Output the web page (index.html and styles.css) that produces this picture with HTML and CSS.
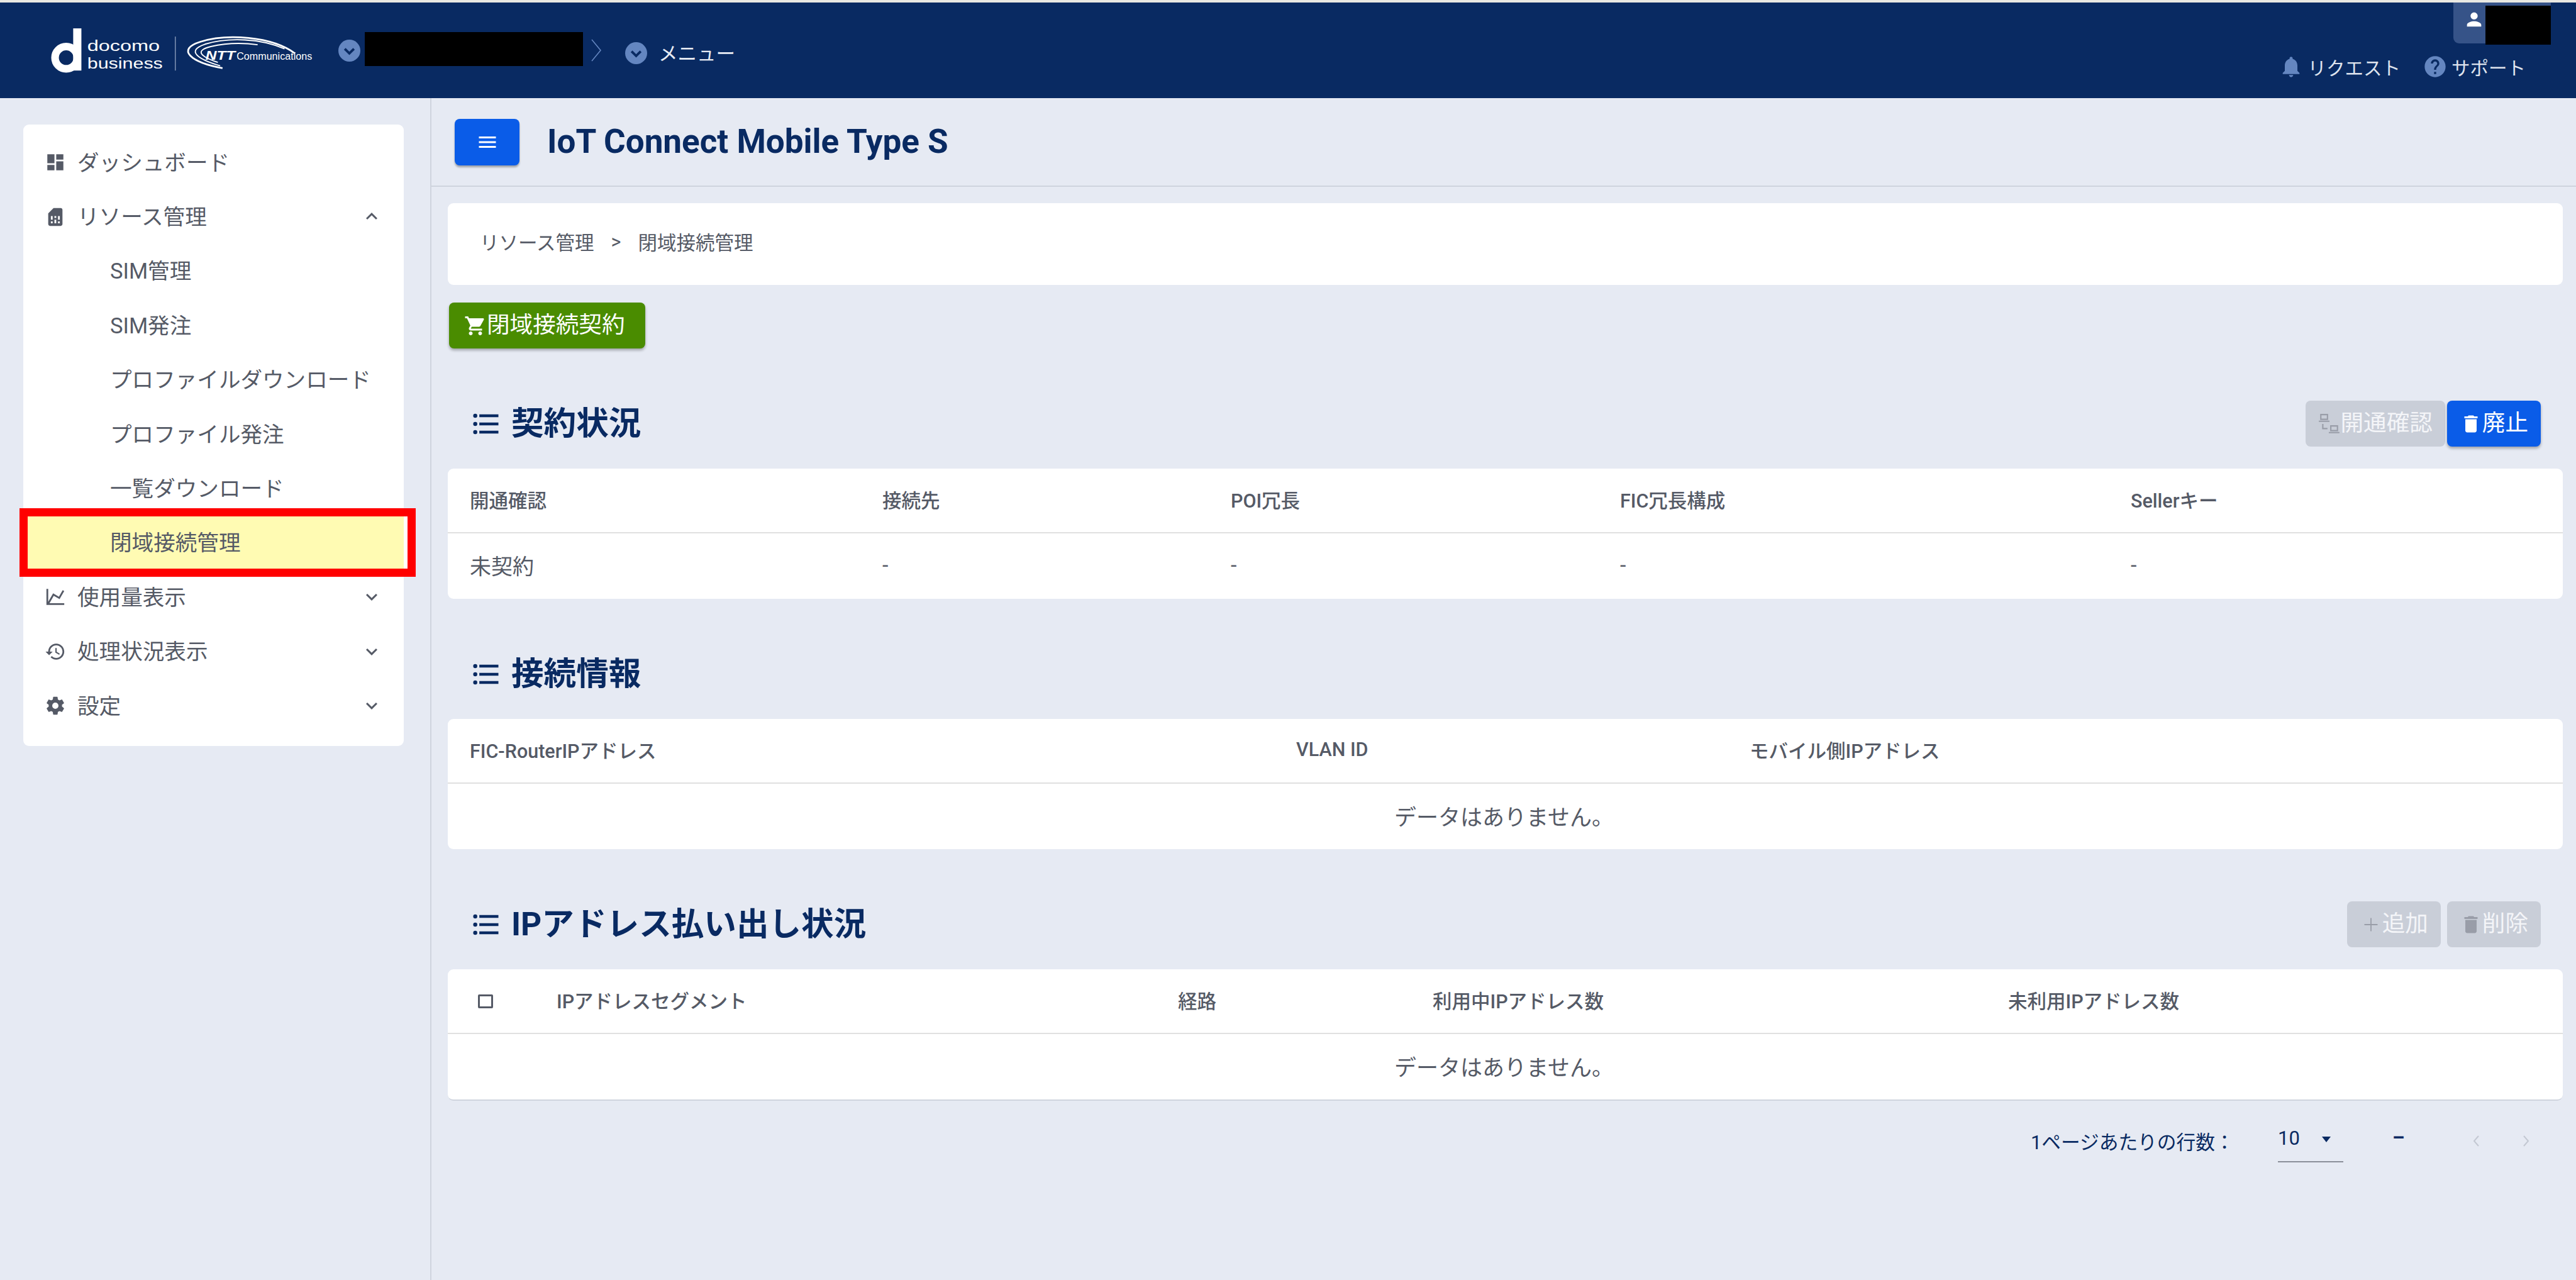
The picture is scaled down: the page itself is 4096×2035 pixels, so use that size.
FILE: index.html
```html
<!DOCTYPE html>
<html lang="ja">
<head>
    <meta charset="UTF-8">
    <title>IoT Connect Mobile Type S</title>
    <link rel="stylesheet" href="styles.css">
</head>
<body>
    <svg class="sprites" width="0" height="0">
        <symbol id="i-dashboard" viewBox="0 0 24 24"><path d="M3 13h8V3H3v10zm0 8h8v-6H3v6zm10 0h8V11h-8v10zm0-18v6h8V3h-8z"/></symbol>
        <symbol id="i-sim" viewBox="0 0 24 24"><path d="M19.99 4c0-1.1-.89-2-1.99-2h-8L4 8v12c0 1.1.9 2 2 2h12c1.1 0 2-.9 2-2l-.01-16zM9 19H7v-2h2v2zm8 0h-2v-2h2v2zm-8-4H7v-4h2v4zm4 4h-2v-4h2v4zm0-6h-2v-2h2v2zm4 2h-2v-4h2v4z"/></symbol>
        <symbol id="i-chart" viewBox="0 0 24 24"><path d="M16,11.78L20.24,4.45L21.97,5.45L16.74,14.5L10.23,10.75L5.46,19H22V21H2V3H4V17.54L9.5,8L16,11.78Z"/></symbol>
        <symbol id="i-history" viewBox="0 0 24 24"><path d="M13 3c-4.97 0-9 4.03-9 9H1l3.89 3.89.07.14L9 12H6c0-3.87 3.13-7 7-7s7 3.13 7 7-3.13 7-7 7c-1.93 0-3.68-.79-4.94-2.06l-1.42 1.42C8.27 19.99 10.51 21 13 21c4.97 0 9-4.03 9-9s-4.03-9-9-9zm-1 5v5l4.28 2.54.72-1.21-3.5-2.08V8H12z"/></symbol>
        <symbol id="i-cog" viewBox="0 0 24 24"><path d="M12,15.5A3.5,3.5 0 0,1 8.5,12A3.5,3.5 0 0,1 12,8.5A3.5,3.5 0 0,1 15.5,12A3.5,3.5 0 0,1 12,15.5M19.43,12.97C19.47,12.65 19.5,12.33 19.5,12C19.5,11.67 19.47,11.34 19.43,11L21.54,9.37C21.73,9.22 21.78,8.95 21.66,8.73L19.66,5.27C19.54,5.05 19.27,4.96 19.05,5.05L16.56,6.05C16.04,5.66 15.5,5.32 14.87,5.07L14.5,2.42C14.46,2.18 14.25,2 14,2H10C9.75,2 9.54,2.18 9.5,2.42L9.13,5.07C8.5,5.32 7.96,5.66 7.44,6.05L4.95,5.05C4.73,4.96 4.46,5.05 4.34,5.27L2.34,8.73C2.21,8.95 2.27,9.22 2.46,9.37L4.57,11C4.53,11.34 4.5,11.67 4.5,12C4.5,12.33 4.53,12.65 4.57,12.97L2.46,14.63C2.27,14.78 2.21,15.05 2.34,15.27L4.34,18.73C4.46,18.95 4.73,19.03 4.95,18.95L7.44,17.94C7.96,18.34 8.5,18.68 9.13,18.93L9.5,21.58C9.54,21.82 9.75,22 10,22H14C14.25,22 14.46,21.82 14.5,21.58L14.87,18.93C15.5,18.67 16.04,18.34 16.56,17.94L19.05,18.95C19.27,19.03 19.54,18.95 19.66,18.73L21.66,15.27C21.78,15.05 21.73,14.78 21.54,14.63L19.43,12.97Z"/></symbol>
        <symbol id="i-down" viewBox="0 0 24 24"><path d="M16.59 8.59L12 13.17 7.41 8.59 6 10l6 6 6-6z"/></symbol>
        <symbol id="i-up" viewBox="0 0 24 24"><path d="M12 8l-6 6 1.41 1.41L12 10.83l4.59 4.58L18 14z"/></symbol>
        <symbol id="i-cart" viewBox="0 0 24 24"><path d="M7 18c-1.1 0-1.99.9-1.99 2S5.9 22 7 22s2-.9 2-2-.9-2-2-2zM1 2v2h2l3.6 7.59-1.35 2.45c-.16.28-.25.61-.25.96 0 1.1.9 2 2 2h12v-2H7.42c-.14 0-.25-.11-.25-.25l.03-.12.9-1.63h7.45c.75 0 1.41-.41 1.75-1.03l3.58-6.49c.08-.14.12-.31.12-.48 0-.55-.45-1-1-1H5.21l-.94-2H1zm16 16c-1.1 0-1.99.9-1.99 2s.89 2 1.99 2 2-.9 2-2-.9-2-2-2z"/></symbol>
        <symbol id="i-list" viewBox="0 0 24 24"><path d="M7,5H21V7H7V5M7,13V11H21V13H7M4,4.5A1.5,1.5 0 0,1 5.5,6A1.5,1.5 0 0,1 4,7.5A1.5,1.5 0 0,1 2.5,6A1.5,1.5 0 0,1 4,4.5M4,10.5A1.5,1.5 0 0,1 5.5,12A1.5,1.5 0 0,1 4,13.5A1.5,1.5 0 0,1 2.5,12A1.5,1.5 0 0,1 4,10.5M7,19V17H21V19H7M4,16.5A1.5,1.5 0 0,1 5.5,18A1.5,1.5 0 0,1 4,19.5A1.5,1.5 0 0,1 2.5,18A1.5,1.5 0 0,1 4,16.5Z"/></symbol>
        <symbol id="i-trash" viewBox="0 0 24 24"><path d="M6 19c0 1.1.9 2 2 2h8c1.1 0 2-.9 2-2V7H6v12zM19 4h-3.5l-1-1h-5l-1 1H5v2h14V4z"/></symbol>
        <symbol id="i-plus" viewBox="0 0 24 24"><path d="M19 12.6h-6.4V19h-1.2v-6.4H5v-1.2h6.4V5h1.2v6.4H19z"/></symbol>
        <symbol id="i-menu" viewBox="0 0 24 24"><path d="M3 18h18v-2H3v2zm0-5h18v-2H3v2zm0-7v2h18V6H3z"/></symbol>
        <symbol id="i-bell" viewBox="0 0 24 24"><path d="M12 22c1.1 0 2-.9 2-2h-4c0 1.1.89 2 2 2zm6-6v-5c0-3.07-1.64-5.64-4.5-6.32V4c0-.83-.67-1.5-1.5-1.5s-1.5.67-1.5 1.5v.68C7.63 5.36 6 7.92 6 11v5l-2 2v1h16v-1l-2-2z"/></symbol>
        <symbol id="i-help" viewBox="0 0 24 24"><path d="M12 2C6.48 2 2 6.48 2 12s4.48 10 10 10 10-4.48 10-10S17.52 2 12 2zm1 17h-2v-2h2v2zm2.07-7.75l-.9.92C13.45 12.9 13 13.5 13 15h-2v-.5c0-1.1.45-2.1 1.17-2.83l1.24-1.26c.37-.36.59-.86.59-1.41 0-1.1-.9-2-2-2s-2 .9-2 2H8c0-2.21 1.79-4 4-4s4 1.79 4 4c0 .88-.36 1.68-.93 2.25z"/></symbol>
        <symbol id="i-person" viewBox="0 0 24 24"><path d="M12 12c2.21 0 4-1.79 4-4s-1.79-4-4-4-4 1.79-4 4 1.79 4 4 4zm0 2c-2.67 0-8 1.34-8 4v2h16v-2c0-2.66-5.33-4-8-4z"/></symbol>
        <symbol id="i-circle-down" viewBox="0 0 24 24"><circle cx="12" cy="12" r="12" fill="#6486c0"/><path d="M7 10l5 5 5-5" fill="none" stroke="#092a62" stroke-width="2.6"/></symbol>
        <symbol id="i-network" viewBox="0 0 34 34"><path d="M3 2h12v9H3zM5 4v5h8V4zM1 12h16v2H1zM18 19h12v9H18zM20 21v5h8v-5zM16 29h16v2H16zM6 17h2v6h6v2H6z"/></symbol>
    </svg>

    <header class="topbar">
        <svg class="logo" viewBox="87 48 450 76">
            <circle cx="113" cy="98" r="19" fill="none" stroke="#fff" stroke-width="13"/>
            <rect x="125" y="48" width="14" height="72" fill="#fff"/>
            <text x="149" y="87" class="logo-text" textLength="124" lengthAdjust="spacingAndGlyphs">docomo</text>
            <text x="149" y="117" class="logo-text" textLength="129" lengthAdjust="spacingAndGlyphs">business</text>
            <rect x="299" y="62" width="1" height="58" fill="#c9d3e6"/>
            <g class="logo-arc">
                <path d="M380 116C326 106 300 84 342 71c44-14 122-10 162 20" stroke-width="3"/>
                <path d="M376 112C336 100 318 86 350 75c40-12 96-10 136 8" stroke-width="2"/>
                <path d="M372 106C342 96 332 86 360 79c26-6 52-7 80-3" stroke-width="2"/>
            </g>
            <text x="351" y="102" class="logo-ntt" textLength="51" lengthAdjust="spacingAndGlyphs">NTT</text>
            <text x="404" y="102" class="logo-com" textLength="129" lengthAdjust="spacingAndGlyphs">Communications</text>
        </svg>
        <svg class="crumb-dot"><use href="#i-circle-down"/></svg>
        <div class="redact-org"></div>
        <svg class="crumb-sep" viewBox="0 0 18 36"><path d="M2 1l14 17L2 35" fill="none" stroke="#6486c0" stroke-width="1.6"/></svg>
        <svg class="crumb-dot crumb-dot-low"><use href="#i-circle-down"/></svg>
        <span class="crumb-menu">メニュー</span>

        <div class="topbar-right">
            <div class="user-tab">
                <svg class="user-icon"><use href="#i-person"/></svg>
                <div class="redact-user"></div>
            </div>
            <div class="toplinks">
                <svg class="toplink-icon"><use href="#i-bell"/></svg>
                <span class="toplink-text">リクエスト</span>
                <svg class="toplink-icon help"><use href="#i-help"/></svg>
                <span class="toplink-text">サポート</span>
            </div>
        </div>
    </header>

    <div class="layout">
        <aside class="sidebar">
            <nav class="nav-card">
                <div class="nav-item"><svg class="nav-icon"><use href="#i-dashboard"/></svg>ダッシュボード</div>
                <div class="nav-item"><svg class="nav-icon"><use href="#i-sim"/></svg>リソース管理<svg class="nav-arrow"><use href="#i-up"/></svg></div>
                <div class="nav-item nav-sub">SIM管理</div>
                <div class="nav-item nav-sub">SIM発注</div>
                <div class="nav-item nav-sub">プロファイルダウンロード</div>
                <div class="nav-item nav-sub">プロファイル発注</div>
                <div class="nav-item nav-sub">一覧ダウンロード</div>
                <div class="nav-item nav-sub nav-active">閉域接続管理</div>
                <div class="nav-item"><svg class="nav-icon"><use href="#i-chart"/></svg>使用量表示<svg class="nav-arrow"><use href="#i-down"/></svg></div>
                <div class="nav-item"><svg class="nav-icon"><use href="#i-history"/></svg>処理状況表示<svg class="nav-arrow"><use href="#i-down"/></svg></div>
                <div class="nav-item"><svg class="nav-icon"><use href="#i-cog"/></svg>設定<svg class="nav-arrow"><use href="#i-down"/></svg></div>
            </nav>
        </aside>

        <main class="main">
            <div class="titlebar">
                <button class="menu-button"><svg class="menu-icon"><use href="#i-menu"/></svg></button>
                <h1 class="page-title">IoT Connect Mobile Type S</h1>
            </div>

            <div class="content">
                <div class="breadcrumb">
                    <span>リソース管理</span>
                    <span class="breadcrumb-sep">&gt;</span>
                    <span>閉域接続管理</span>
                </div>

                <button class="btn btn-green"><svg class="btn-icon"><use href="#i-cart"/></svg>閉域接続契約</button>

                <section class="section">
                    <div class="section-head">
                        <h2 class="section-title"><svg class="section-icon"><use href="#i-list"/></svg>契約状況</h2>
                        <div class="actions actions-tight">
                            <button class="btn btn-off"><svg class="btn-icon"><use href="#i-network"/></svg>開通確認</button>
                            <button class="btn btn-blue"><svg class="btn-icon"><use href="#i-trash"/></svg>廃止</button>
                        </div>
                    </div>
                    <div class="table">
                        <div class="row row-head cols-contract">
                            <div>開通確認</div><div>接続先</div><div>POI冗長</div><div>FIC冗長構成</div><div>Sellerキー</div>
                        </div>
                        <div class="row cols-contract">
                            <div>未契約</div><div>-</div><div>-</div><div>-</div><div>-</div>
                        </div>
                    </div>
                </section>

                <section class="section">
                    <div class="section-head">
                        <h2 class="section-title"><svg class="section-icon"><use href="#i-list"/></svg>接続情報</h2>
                    </div>
                    <div class="table">
                        <div class="row row-head cols-connect">
                            <div>FIC-RouterIPアドレス</div><div>VLAN ID</div><div>モバイル側IPアドレス</div>
                        </div>
                        <div class="row row-empty">データはありません。</div>
                    </div>
                </section>

                <section class="section">
                    <div class="section-head">
                        <h2 class="section-title"><svg class="section-icon"><use href="#i-list"/></svg>IPアドレス払い出し状況</h2>
                        <div class="actions">
                            <button class="btn btn-off"><svg class="btn-icon"><use href="#i-plus"/></svg>追加</button>
                            <button class="btn btn-off"><svg class="btn-icon"><use href="#i-trash"/></svg>削除</button>
                        </div>
                    </div>
                    <div class="table table-last">
                        <div class="row row-head cols-ip">
                            <div><span class="checkbox"></span></div><div>IPアドレスセグメント</div><div>経路</div><div>利用中IPアドレス数</div><div>未利用IPアドレス数</div>
                        </div>
                        <div class="row row-empty">データはありません。</div>
                    </div>
                </section>

                <div class="pager">
                    <span class="pager-label">1ページあたりの行数：</span>
                    <div class="pager-select"><span>10</span><span class="pager-caret"></span></div>
                    <span class="pager-range">–</span>
                    <svg class="pager-arrow" viewBox="0 0 12 18"><path d="M10 1L3 9l7 8" fill="none" stroke="#c3c8d2" stroke-width="2"/></svg>
                    <svg class="pager-arrow pager-next" viewBox="0 0 12 18"><path d="M2 1l7 8-7 8" fill="none" stroke="#c3c8d2" stroke-width="2"/></svg>
                </div>
            </div>
        </main>
    </div>
</body>
</html>
```
FILE: styles.css
```css
* {
    box-sizing: border-box;
}
html, body {
    margin: 0;
    height: 100%;
    overflow: hidden;
}
body {
    background: #e6eaf3;
    color: #555a66;
    font-family: Roboto, "Noto Sans CJK JP", sans-serif;
    display: flex;
    flex-direction: column;
}
button {
    font-family: inherit;
    border: none;
}
svg {
    fill: currentColor;
    flex: none;
}
.sprites {
    position: absolute;
}

/* top bar */
.topbar {
    height: 156px;
    flex: none;
    border-top: 4px solid #e9e8e2;
    background: #092a62;
    color: #e8ecf4;
    padding-left: 81px;
    display: flex;
    align-items: center;
}
.logo {
    width: 419px;
    height: 71px;
    margin-right: 38px;
}
.logo-text {
    font-family: "Liberation Sans", sans-serif;
    font-size: 26px;
    fill: #fff;
}
.logo-arc path {
    fill: none;
    stroke: #fff;
}
.logo-ntt {
    font-family: "Liberation Sans", sans-serif;
    font-size: 21px;
    font-weight: bold;
    font-style: italic;
    fill: #fff;
}
.logo-com {
    font-family: "Liberation Sans", sans-serif;
    font-size: 18px;
    fill: #fff;
}
.crumb-dot {
    width: 35px;
    height: 35px;
}
.crumb-dot-low {
    margin: 8px 0 0 37px;
}
.redact-org {
    width: 347px;
    height: 54px;
    margin: -5px 0 0 7px;
    background: #000;
}
.crumb-sep {
    width: 18px;
    height: 36px;
    margin-left: 12px;
}
.crumb-menu {
    font-size: 30.5px;
    margin: 6px 0 0 18px;
}
.topbar-right {
    margin-left: auto;
    align-self: stretch;
    padding-right: 40px;
    display: flex;
    flex-direction: column;
    align-items: flex-end;
}
.user-tab {
    width: 155px;
    height: 65px;
    background: #365388;
    border-bottom-left-radius: 9px;
    padding-left: 16px;
    display: flex;
    position: relative;
}
.user-icon {
    width: 34px;
    height: 34px;
    margin-top: 10px;
    color: #fff;
}
.redact-user {
    position: absolute;
    top: 5px;
    right: 0;
    width: 104px;
    height: 62px;
    background: #000;
}
.toplinks {
    margin: 16px 40px 0 0;
    display: flex;
    align-items: center;
    color: #dfe4ee;
}
.toplink-icon {
    width: 40px;
    height: 40px;
    color: #6486c0;
}
.toplink-icon.help {
    margin-left: 35px;
}
.toplink-text {
    font-size: 29.5px;
    margin-left: 6px;
}

.layout {
    flex: 1;
    display: flex;
    min-height: 0;
}

/* side menu */
.sidebar {
    width: 686px;
    flex: none;
    border-right: 2px solid #cfd4de;
    padding: 42px 0 0 37px;
}
.nav-card {
    width: 605px;
    background: #fff;
    border-radius: 9px;
    padding: 17px 0 21px;
}
.nav-item {
    height: 86.4px;
    padding: 0 0 5px 34px;
    display: flex;
    align-items: center;
    font-size: 34.6px;
    position: relative;
}
.nav-icon {
    width: 34px;
    height: 34px;
    margin: 5px 18px 0 0;
}
.nav-arrow {
    position: absolute;
    left: 536px;
    top: 25px;
    width: 36px;
    height: 36px;
}
.nav-sub {
    padding-left: 138px;
}
.nav-active {
    background: #fffbb3;
}
/* white strip and red frame laid over the selected row */
.nav-active::before {
    content: "";
    position: absolute;
    left: 100%;
    top: 0;
    bottom: 0;
    width: 6px;
    background: #fff;
}
.nav-active::after {
    content: "";
    position: absolute;
    left: -6px;
    right: -19px;
    top: -12px;
    bottom: -11px;
    border: 13px solid #f00;
}

/* main column */
.main {
    flex: 1;
    min-width: 0;
}
.titlebar {
    height: 141px;
    border-bottom: 2px solid #cfd4de;
    padding: 33px 0 0 37px;
    display: flex;
    align-items: flex-start;
}
.menu-button {
    width: 103px;
    height: 74px;
    background: #0a5ce8;
    border-radius: 8px;
    color: #fff;
    box-shadow: 0 3px 3px rgba(0, 0, 0, 0.3);
    display: flex;
    align-items: center;
    justify-content: center;
}
.menu-icon {
    width: 36px;
    height: 36px;
}
.page-title {
    margin: 0 0 0 44px;
    height: 72px;
    line-height: 72px;
    font-size: 53px;
    font-weight: 700;
    color: #092a62;
}
.content {
    padding: 26px 21px 0 26px;
}
.breadcrumb {
    height: 130px;
    background: #fff;
    border-radius: 9px;
    padding: 0 0 8px 51px;
    display: flex;
    align-items: center;
    font-size: 30.5px;
}
.breadcrumb-sep {
    margin: 0 27px;
}

/* buttons */
.btn {
    height: 73px;
    padding: 0 20px 8px;
    border-radius: 8px;
    display: flex;
    align-items: center;
    font-size: 36.6px;
    color: #fff;
}
.btn-icon {
    width: 36px;
    height: 36px;
    margin-top: 8px;
}
.btn-green {
    width: 312px;
    margin: 28px 0 0 2px;
    padding-left: 24px;
    background: #4a8c00;
    box-shadow: 0 3px 4px rgba(0, 0, 0, 0.3);
}
.btn-blue {
    background: #0a5ce8;
    box-shadow: 0 3px 4px rgba(0, 0, 0, 0.3);
}
.btn-off {
    background: #c9ced8;
    color: #f4f5f8;
}
.btn-off .btn-icon {
    color: #999da8;
}

/* sections and tables */
.section-head {
    height: 73px;
    margin-top: 83px;
    padding: 0 35px;
    display: flex;
    align-items: center;
    justify-content: space-between;
}
.section-title {
    margin: 0;
    padding-bottom: 10px;
    display: flex;
    align-items: center;
    font-size: 51.6px;
    font-weight: 700;
    color: #092a62;
}
.section-icon {
    width: 52px;
    height: 52px;
    margin: 10px 14px 0 0;
}
.actions {
    display: flex;
    gap: 10px;
}
.actions-tight {
    gap: 3px;
}
.table {
    margin-top: 35px;
    background: #fff;
    border-radius: 9px;
}
.table-last {
    border-bottom: 2px solid #cfd4de;
}
.row {
    height: 104px;
    padding: 0 0 4px 35px;
    display: grid;
    align-items: center;
    font-size: 34px;
}
.row-head {
    height: 103px;
    border-bottom: 2px solid #e0e0e0;
    font-size: 30.5px;
    font-weight: 500;
}
.row-empty {
    justify-items: center;
    padding: 0 4px 4px 0;
    font-size: 35px;
}
.cols-contract {
    grid-template-columns: 656px 554px 619px 812px 1fr;
}
.cols-connect {
    grid-template-columns: 1314px 721px 1fr;
}
.cols-ip {
    grid-template-columns: 138px 988px 405px 915px 1fr;
}
.checkbox {
    display: block;
    width: 24px;
    height: 22px;
    margin: 4px 0 0 13px;
    border: 3px solid #555a66;
    border-radius: 2px;
}

/* pagination */
.pager {
    margin: 41px 0 0 0;
    padding-left: 2517px;
    display: flex;
    align-items: flex-start;
    font-size: 30.7px;
    color: #092a62;
}
.pager-label {
    width: 393px;
}
.pager-select {
    width: 104px;
    height: 57px;
    border-bottom: 2px solid #8b8f99;
    display: flex;
    justify-content: space-between;
    font-size: 31px;
}
.pager-caret {
    margin: 16px 20px 0 0;
    border-style: solid;
    border-width: 9px 7px 0;
    border-color: #092a62 transparent transparent;
}
.pager-range {
    margin-left: 78px;
    width: 28px;
    font-weight: 700;
}
.pager-arrow {
    width: 12px;
    height: 18px;
    margin: 14px 0 0 99px;
}
.pager-next {
    margin-left: 68px;
}
```
